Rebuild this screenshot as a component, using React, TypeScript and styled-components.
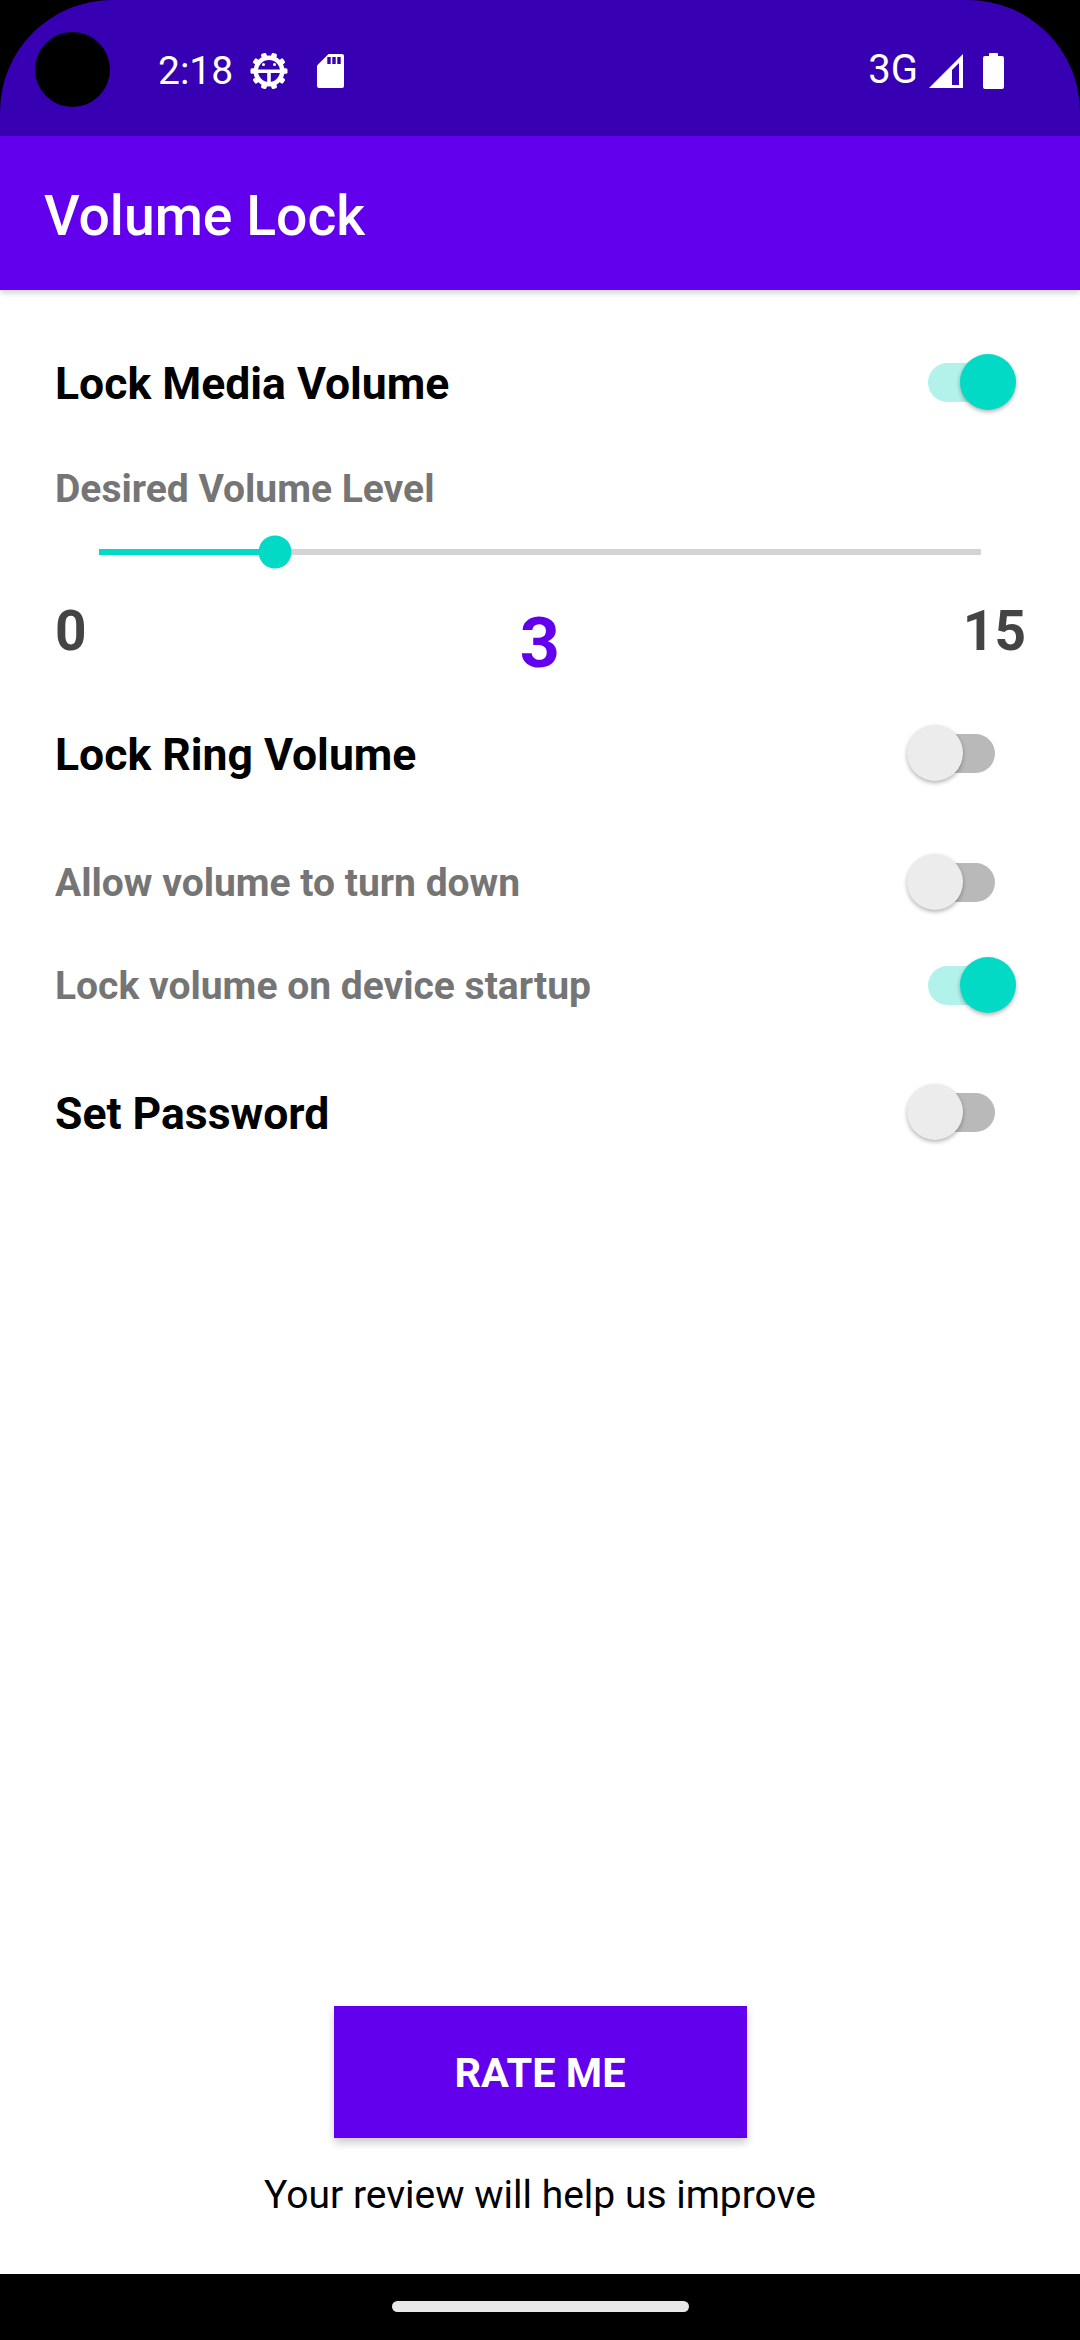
import styled, { createGlobalStyle } from "styled-components";

const GlobalStyle = createGlobalStyle`
  html, body {
    margin: 0;
    padding: 0;
    background: #000;
    font-family: Roboto, "Noto Sans", sans-serif;
  }
`;

function BugGearIcon() {
  return (
    <svg width="38" height="38" viewBox="0 0 38 38">
      <g fill="#fff">
        {[0, 36, 72, 108, 144].map((a) => (
          <rect key={a} x="16.200" y="0.500" width="5.600" height="37" rx="1.500" transform={`rotate(${a + 18} 19 19)`} />
        ))}
        <circle cx="19" cy="19" r="15.500" />
      </g>
      <circle cx="19" cy="19" r="11" fill="#3700B3" />
      <path d="M7 17.500h24v3.500H7z M17.200 20h3.600v11h-3.600z" fill="#fff" />
      <circle cx="13.500" cy="12.500" r="1.500" fill="#fff" />
      <circle cx="24.500" cy="12.500" r="1.500" fill="#fff" />
    </svg>
  );
}

function SdCardIcon() {
  return (
    <svg width="27" height="34" viewBox="0 0 27 34">
      <path
        d="M11.500 0H25a2 2 0 0 1 2 2v30a2 2 0 0 1-2 2H2a2 2 0 0 1-2-2V11.500z"
        fill="#fff"
      />
      <path d="M10.300 3h3.400v7h-3.400z M15.300 3h3.400v7h-3.400z M20.300 3h3.400v7h-3.400z" fill="#3700B3" />
    </svg>
  );
}

function SignalIcon() {
  return (
    <svg width="34" height="34" viewBox="0 0 34 34">
      <path d="M0 34 34 0v34z" fill="#fff" />
      <path d="M23 16l7-7v22h-7z" fill="#3700B3" />
    </svg>
  );
}

function BatteryIcon() {
  return (
    <svg width="21" height="36" viewBox="0 0 21 36">
      <path
        d="M6 3V1a1 1 0 0 1 1-1h7a1 1 0 0 1 1 1v2h4a2 2 0 0 1 2 2v29a2 2 0 0 1-2 2H2a2 2 0 0 1-2-2V5a2 2 0 0 1 2-2z"
        fill="#fff"
      />
    </svg>
  );
}

export default function App() {
  return (
    <>
      <GlobalStyle />
      <Screen>
        <StatusBar>
          <Camera />
          <Clock>2:18</Clock>
          <BugGearIcon />
          <SdCardIcon />
          <StatusRight>
            <Network>3G</Network>
            <SignalIcon />
            <BatteryIcon />
          </StatusRight>
        </StatusBar>
        <AppBar>Volume Lock</AppBar>
        <Main>
          <ToggleRow $top={56}>
            <Heading>Lock Media Volume</Heading>
            <Toggle on />
          </ToggleRow>
          <SubLabel $top={46}>Desired Volume Level</SubLabel>
          <SliderTrack>
            <SliderFill style={{ width: `${(3 / 15) * 100}%` }} />
            <SliderThumb style={{ left: `${(3 / 15) * 100}%` }} />
          </SliderTrack>
          <Scale>
            <ScaleEnd>0</ScaleEnd>
            <ScaleValue>3</ScaleValue>
            <ScaleEnd>15</ScaleEnd>
          </Scale>
          <ToggleRow $top={36}>
            <Heading>Lock Ring Volume</Heading>
            <Toggle />
          </ToggleRow>
          <ToggleRow $top={57}>
            <SubLabel>Allow volume to turn down</SubLabel>
            <Toggle />
          </ToggleRow>
          <ToggleRow $top={31}>
            <SubLabel>Lock volume on device startup</SubLabel>
            <Toggle on />
          </ToggleRow>
          <ToggleRow $top={55}>
            <Heading>Set Password</Heading>
            <Toggle />
          </ToggleRow>
        </Main>
        <Footer>
          <RateButton>RATE ME</RateButton>
          <Hint>Your review will help us improve</Hint>
        </Footer>
        <NavBar>
          <HomePill />
        </NavBar>
      </Screen>
    </>
  );
}

function Toggle({ on = false }: { on?: boolean }) {
  return (
    <SwitchBox>
      <SwitchTrack $on={on} />
      <SwitchThumb $on={on} />
    </SwitchBox>
  );
}

const Screen = styled.div`
  width: 1080px;
  height: 2340px;
  display: flex;
  flex-direction: column;
  background: #000;
`;

const StatusBar = styled.div`
  height: 136px;
  flex: none;
  display: flex;
  align-items: center;
  padding: 6px 76px 0 35px;
  box-sizing: border-box;
  background: #3700b3;
  border-radius: 112px 112px 0 0 / 112px 112px 0 0;
  color: #fff;
  > svg:nth-of-type(1) {
    margin-left: 17px;
  }
  > svg:nth-of-type(2) {
    margin-left: 29px;
  }
`;

const Camera = styled.div`
  width: 75px;
  height: 75px;
  margin-top: -3px;
  border-radius: 50%;
  background: #000;
`;

const Clock = styled.span`
  margin-left: 48px;
  font-size: 39px;
  line-height: 44px;
`;

const StatusRight = styled.div`
  margin-left: auto;
  display: flex;
  align-items: center;
  gap: 20px;
`;

const Network = styled.span`
  font-size: 40px;
  line-height: 44px;
  margin: -3px -9px 0 0;
`;

const AppBar = styled.div`
  height: 154px;
  flex: none;
  display: flex;
  align-items: center;
  box-sizing: border-box;
  padding: 6px 0 0 44px;
  background: #6200ee;
  color: #fff;
  font-size: 55.300px;
  font-weight: 500;
  box-shadow: 0 3px 6px rgba(0, 0, 0, 0.18);
  position: relative;
`;

const Main = styled.div`
  flex: 1;
  display: flex;
  flex-direction: column;
  background: #fff;
  padding-left: 55px;
`;

const ToggleRow = styled.div<{ $top: number }>`
  height: 72px;
  margin-top: ${(p) => p.$top}px;
  padding-right: 64px;
  display: flex;
  align-items: center;
  justify-content: space-between;
`;

const Heading = styled.div`
  padding-top: 4px;
  font-size: 44.500px;
  font-weight: 700;
  color: #000;
`;

const SubLabel = styled.div<{ $top?: number }>`
  margin-top: ${(p) => p.$top ?? 0}px;
  padding-top: 2px;
  font-size: 39px;
  line-height: 46px;
  font-weight: 700;
  color: #757575;
`;

const SwitchBox = styled.div`
  position: relative;
  width: 111px;
  height: 56px;
`;

const SwitchTrack = styled.div<{ $on: boolean }>`
  position: absolute;
  top: 9px;
  left: ${(p) => (p.$on ? 23 : 17)}px;
  width: 73px;
  height: 39px;
  border-radius: 20px;
  background: ${(p) => (p.$on ? "#b3f1eb" : "#b9b9b9")};
`;

const SwitchThumb = styled.div<{ $on: boolean }>`
  position: absolute;
  top: 0;
  left: ${(p) => (p.$on ? 55 : 2)}px;
  width: 56px;
  height: 56px;
  border-radius: 50%;
  background: ${(p) => (p.$on ? "#03dac5" : "#ececec")};
  box-shadow: 0 2px 4px rgba(0, 0, 0, 0.3);
`;

const SliderTrack = styled.div`
  position: relative;
  width: 882px;
  height: 6px;
  margin: 37px 0 0 44px;
  background: #d4d4d4;
`;

const SliderFill = styled.div`
  height: 100%;
  background: #03dac5;
`;

const SliderThumb = styled.div`
  position: absolute;
  top: 50%;
  width: 33px;
  height: 33px;
  border-radius: 50%;
  background: #03dac5;
  transform: translate(-50%, -50%);
`;

const Scale = styled.div`
  display: flex;
  justify-content: space-between;
  align-items: flex-start;
  margin-top: 44px;
  padding-right: 54px;
  height: 82px;
`;

const ScaleEnd = styled.span`
  font-size: 55px;
  line-height: 64px;
  font-weight: 700;
  color: #444;
`;

const ScaleValue = styled.span`
  margin: 2px 0 0 30px;
  font-size: 70px;
  line-height: 84px;
  font-weight: 700;
  color: #6200ee;
`;

const Footer = styled.div`
  flex: none;
  display: flex;
  flex-direction: column;
  align-items: center;
  box-sizing: border-box;
  padding-top: 6px;
  background: #fff;
  height: 274px;
`;

const RateButton = styled.div`
  width: 413px;
  height: 132px;
  display: flex;
  align-items: center;
  justify-content: center;
  background: #6200ee;
  color: #fff;
  font-size: 41.500px;
  font-weight: 700;
  box-shadow: 0 5px 8px rgba(0, 0, 0, 0.2);
`;

const Hint = styled.div`
  margin-top: 34px;
  font-size: 39px;
  line-height: 46px;
  color: #000;
`;

const NavBar = styled.div`
  height: 66px;
  flex: none;
  display: flex;
  align-items: flex-start;
  justify-content: center;
  background: #000;
`;

const HomePill = styled.div`
  width: 297px;
  height: 11px;
  margin-top: 27px;
  border-radius: 6px;
  background: #e8e8e8;
`;
